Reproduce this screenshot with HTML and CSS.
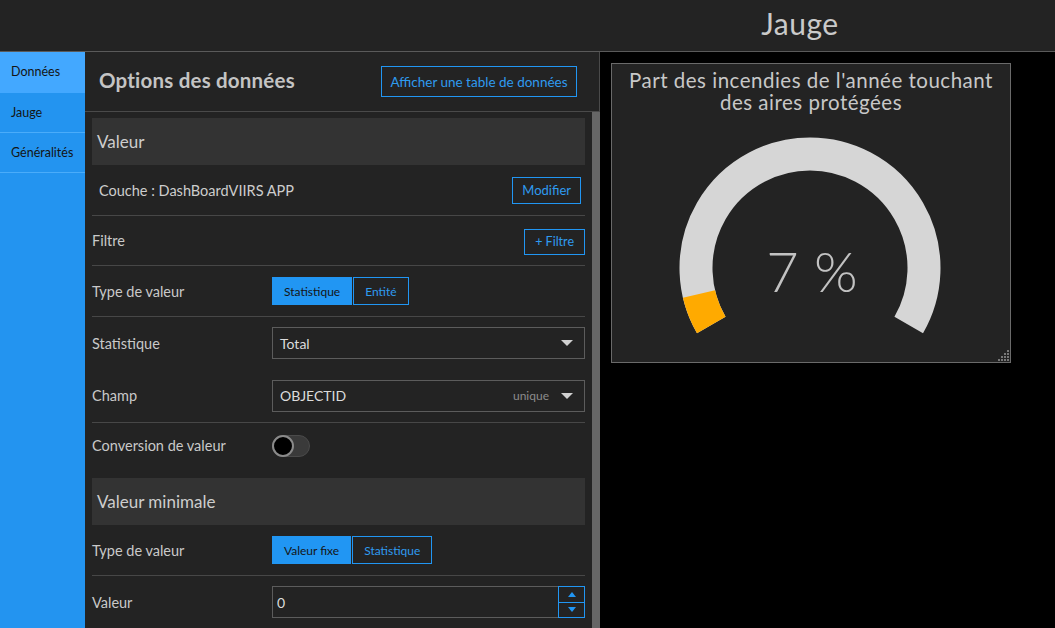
FILE: index.html
```html
<!DOCTYPE html>
<html lang="fr">
<head>
<meta charset="utf-8">
<title>Jauge</title>
<link rel="stylesheet" href="styles.css">
</head>
<body>
<header class="topbar">
  <div class="topbar-title">Jauge</div>
</header>
<div class="main">
  <nav class="sidebar">
    <div class="tab active">Données</div>
    <div class="tab">Jauge</div>
    <div class="tab">Généralités</div>
  </nav>
  <section class="panel">
    <div class="panel-head">
      <h1 class="panel-title">Options des données</h1>
      <button class="btn-outline btn-table">Afficher une table de données</button>
    </div>
    <div class="panel-body">
      <div class="panel-content">
        <div class="section-head">Valeur</div>
        <div class="row row-layer">
          <span class="layer-name">Couche : DashBoardVIIRS APP</span>
          <button class="btn-outline btn-small">Modifier</button>
        </div>
        <div class="row row-filter">
          <span class="label">Filtre</span>
          <button class="btn-outline btn-small btn-filter">+ Filtre</button>
        </div>
        <div class="row row-form">
          <span class="label">Type de valeur</span>
          <div class="segmented">
            <span class="seg seg-on">Statistique</span>
            <span class="seg">Entité</span>
          </div>
        </div>
        <div class="row row-form row-plain row-stat">
          <span class="label">Statistique</span>
          <div class="select"><span class="sel-text">Total</span><span class="caret"></span></div>
        </div>
        <div class="row row-form row-champ">
          <span class="label">Champ</span>
          <div class="select"><span class="sel-text">OBJECTID</span><span class="sel-hint">unique</span><span class="caret"></span></div>
        </div>
        <div class="row row-form row-plain row-toggle">
          <span class="label">Conversion de valeur</span>
          <span class="toggle"><span class="knob"></span></span>
        </div>
        <div class="section-head section-gap">Valeur minimale</div>
        <div class="row row-form row-type2">
          <span class="label">Type de valeur</span>
          <div class="segmented">
            <span class="seg seg-on">Valeur fixe</span>
            <span class="seg">Statistique</span>
          </div>
        </div>
        <div class="row row-form row-plain row-value">
          <span class="label">Valeur</span>
          <div class="number">
            <span class="num-text">0</span>
            <span class="spin">
              <span class="spin-btn"><svg width="8" height="5" viewBox="0 0 8 5"><path d="M0 5 L4 0 L8 5 Z" fill="#2196f3"/></svg></span>
              <span class="spin-btn"><svg width="8" height="5" viewBox="0 0 8 5"><path d="M0 0 L4 5 L8 0 Z" fill="#2196f3"/></svg></span>
            </span>
          </div>
        </div>
      </div>
      <div class="scrollbar"></div>
    </div>
  </section>
  <section class="canvas">
    <div class="card">
      <div class="card-title">Part des incendies de l'année touchant<br>des aires protégées</div>
      <svg class="gauge" width="398" height="247" viewBox="0 0 398 247">
        <path d="M 99.27 211 A 114 114 0 1 1 296.73 211" fill="none" stroke="#d6d6d6" stroke-width="33"/>
        <path d="M 99.27 211 A 114 114 0 0 1 87.01 180.04" fill="none" stroke="#ffaa00" stroke-width="33"/>
        <text x="200" y="178" text-anchor="middle" class="gauge-value">7 %</text>
      </svg>
      <svg class="resize" width="14" height="14" viewBox="0 0 14 14">
        <g fill="#777">
          <rect x="11" y="2" width="2" height="2"/>
          <rect x="8" y="5" width="2" height="2"/><rect x="11" y="5" width="2" height="2"/>
          <rect x="5" y="8" width="2" height="2"/><rect x="8" y="8" width="2" height="2"/><rect x="11" y="8" width="2" height="2"/>
          <rect x="2" y="11" width="2" height="2"/><rect x="5" y="11" width="2" height="2"/><rect x="8" y="11" width="2" height="2"/><rect x="11" y="11" width="2" height="2"/>
        </g>
      </svg>
    </div>
  </section>
</div>
</body>
</html>
```

FILE: styles.css
```css
* { box-sizing: border-box; }
html, body {
  margin: 0;
  padding: 0;
  width: 1055px;
  height: 628px;
  overflow: hidden;
  background: #000;
  font-family: Lato, "Noto Sans", sans-serif;
  color: #cfcfcf;
}
button { font-family: inherit; cursor: pointer; }

.topbar {
  height: 52px;
  background: #232323;
  border-bottom: 1px solid #5a5a5a;
  display: flex;
  align-items: center;
}
.topbar-title {
  width: 100%;
  padding-left: 545px;
  text-align: center;
  font-size: 30px;
  letter-spacing: 0.5px;
  color: #cacaca;
  padding-bottom: 5px;
}

.main {
  display: flex;
  height: 576px;
}

.sidebar {
  width: 85px;
  flex: none;
  background: #2394f0;
}
.tab {
  height: 40px;
  line-height: 40px;
  padding-left: 11px;
  font-size: 12.5px;
  color: #141414;
  border-bottom: 1px solid #4aacfa;
}
.tab.active {
  height: 41px;
  background: #43a8ff;
  border-bottom: none;
}

.panel {
  width: 515px;
  flex: none;
  background: #232323;
  display: flex;
  flex-direction: column;
}
.panel-head {
  height: 60px;
  flex: none;
  display: flex;
  align-items: center;
  justify-content: space-between;
  padding: 0 22px 3px 14px;
  border-bottom: 1px solid #4a4a4a;
  border-right: 1px solid #4a4a4a;
}
.panel-title {
  margin: 0;
  font-size: 20.5px;
  font-weight: 700;
  letter-spacing: 0.2px;
  color: #c4c4c4;
}
.btn-outline {
  background: transparent;
  border: 1px solid #2196f3;
  color: #2f9bf0;
  font-size: 13px;
  padding: 0 8px;
  border-radius: 0;
}
.btn-table {
  height: 31px;
  width: 196px;
  margin-top: 3px;
  font-size: 13.5px;
  padding: 0;
}

.panel-body {
  flex: 1;
  display: flex;
  min-height: 0;
}
.panel-content {
  flex: 1;
  padding: 6px 7px 0 7px;
  overflow: hidden;
}
.scrollbar {
  width: 8px;
  flex: none;
  background: #666;
}

.section-head {
  height: 47px;
  background: #333;
  display: flex;
  align-items: center;
  padding-left: 5px;
  font-size: 17px;
  color: #cdcdcd;
}
.section-gap { margin-top: 10px; }

.row {
  display: flex;
  align-items: center;
  border-bottom: 1px solid #474747;
  font-size: 14.5px;
}
.row-layer {
  height: 51px;
  justify-content: space-between;
  padding: 0 4px 0 7px;
}
.layer-name { color: #cdcdcd; }
.btn-small {
  height: 27px;
  padding: 0 9px;
}
.row-filter {
  height: 50px;
  justify-content: space-between;
}
.btn-filter { height: 26px; padding: 0 10px; margin-top: 2px; font-size: 12.5px; }

.label {
  width: 180px;
  flex: none;
  color: #c9c9c9;
}
.row-form { height: 51px; }
.row-plain { border-bottom: none; }
.row-stat { height: 52px; }
.row-champ { height: 54px; }
.row-toggle { height: 45px; }
.row-type2 { height: 51px; }
.row-value { height: 52px; }

.segmented { display: flex; gap: 1px; }
.seg {
  height: 28px;
  display: flex;
  align-items: center;
  padding: 0 11px;
  font-size: 12px;
  border: 1px solid #2196f3;
  color: #2f9bf0;
}
.seg-on {
  background: #2196f3;
  color: #151515;
}

.select {
  flex: 1;
  height: 32px;
  border: 1px solid #5c5c5c;
  display: flex;
  align-items: center;
  padding: 0 11px 0 7px;
  color: #dcdcdc;
  font-size: 14px;
}
.sel-text { flex: 1; }
.sel-hint {
  font-size: 12px;
  color: #8c8c8c;
  margin-right: 12px;
}
.caret {
  width: 0;
  height: 0;
  border-left: 6px solid transparent;
  border-right: 6px solid transparent;
  border-top: 6px solid #d0d0d0;
}

.toggle {
  width: 38px;
  height: 22px;
  border-radius: 11px;
  background: #3a3a3a;
  border: 1px solid #4a4a4a;
  display: flex;
  align-items: center;
}
.knob {
  width: 22px;
  height: 22px;
  border-radius: 50%;
  background: #000;
  border: 2px solid #8a8a8a;
  margin-left: -1px;
}

.number {
  flex: 1;
  height: 32px;
  border: 1px solid #5c5c5c;
  display: flex;
  align-items: stretch;
  color: #dcdcdc;
}
.num-text {
  flex: 1;
  display: flex;
  align-items: center;
  padding-left: 4px;
  font-size: 14px;
}
.spin {
  width: 27px;
  display: flex;
  flex-direction: column;
  margin: -1px -1px -1px 0;
}
.spin-btn {
  flex: 1;
  border: 1px solid #2196f3;
  display: flex;
  align-items: center;
  justify-content: center;
}
.spin-btn + .spin-btn { border-top: none; }

.canvas {
  flex: 1;
  background: #000;
  padding: 11px;
}
.card {
  position: relative;
  width: 400px;
  height: 300px;
  background: #232323;
  border: 1px solid #6a6a6a;
}
.card-title {
  padding-top: 5px;
  text-align: center;
  font-size: 20.5px;
  letter-spacing: 0.5px;
  line-height: 22px;
  color: #c8c8c8;
  height: 50px;
}
.gauge { display: block; }
.gauge-value {
  font-family: Lato, "Noto Sans", sans-serif;
  font-size: 56px;
  font-weight: 300;
  fill: #c2c2c2;
}
.resize {
  position: absolute;
  right: 0;
  bottom: 0;
}
```
